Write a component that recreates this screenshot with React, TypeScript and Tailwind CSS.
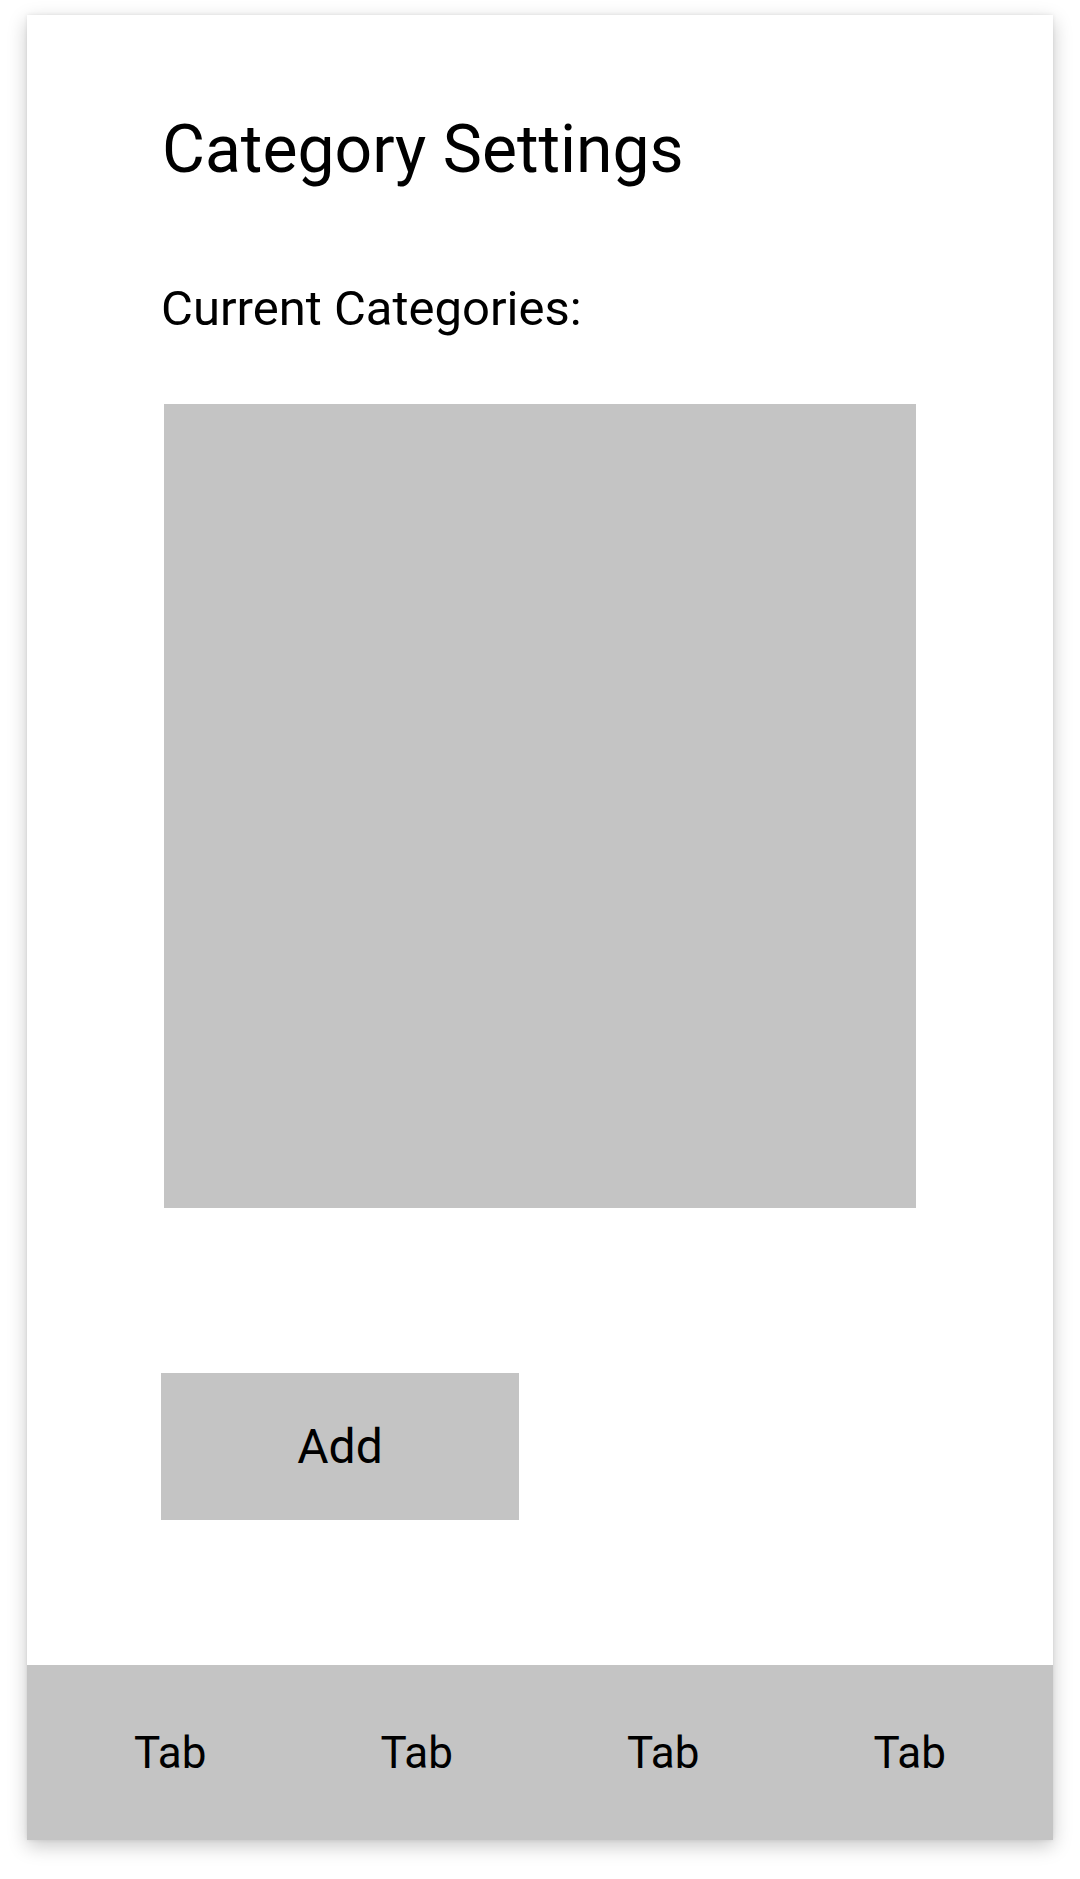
export default function App() {
  const tabs = ['Tab', 'Tab', 'Tab', 'Tab'];

  return (
    <div className="min-h-[1879px] bg-white pt-[15px] px-[27px] font-['Roboto','Liberation_Sans',sans-serif] text-black">
      <div className="h-[1825px] flex flex-col bg-white shadow-[0_6px_18px_rgba(0,0,0,0.22),0_0_4px_rgba(0,0,0,0.08)]">
        {/* content */}
        <div className="pl-[134px] pt-[102px]">
          <h1 className="ml-[1px] text-[66px] leading-none font-normal">Category Settings</h1>
          <p className="mt-[101px] text-[49px] leading-none">Current Categories:</p>
          <div className="mt-[71px] ml-[3px] w-[752px] h-[804px] bg-[#c4c4c4]" />
          <button className="mt-[165px] w-[358px] h-[147px] bg-[#c4c4c4] text-[48px] leading-none flex items-center justify-center">
            Add
          </button>
        </div>

        {/* bottom tabs */}
        <nav className="mt-auto h-[175px] bg-[#c4c4c4] grid grid-cols-4 px-[20px]">
          {tabs.map((t, i) => (
            <div key={i} className="flex items-center justify-center text-[44px] leading-none">
              {t}
            </div>
          ))}
        </nav>
      </div>
    </div>
  );
}
